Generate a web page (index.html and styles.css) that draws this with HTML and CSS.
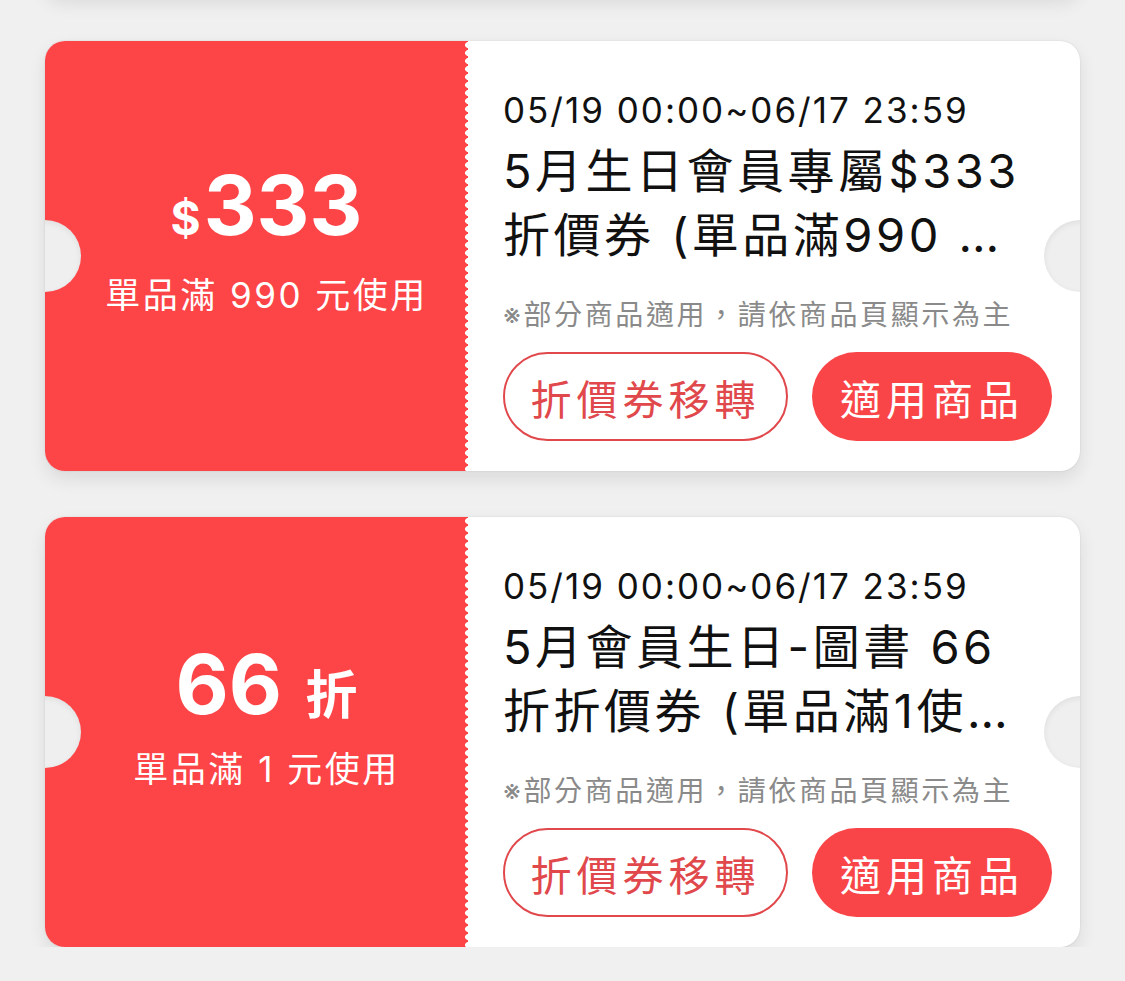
FILE: index.html
```html
<!DOCTYPE html>
<html lang="zh-Hant">
<head>
    <meta charset="UTF-8">
    <meta name="viewport" content="width=device-width, initial-scale=1.0">
    <title>我的折價券</title>
    <link rel="stylesheet" href="styles.css">
</head>
<body>
    <div class="coupon-list">
        <!-- tail of the coupon above, scrolled out of view -->
        <div class="coupon coupon-stub"></div>

        <div class="coupon">
            <div class="coupon-value">
                <div class="amount"><span class="unit-small">$</span>333</div>
                <div class="rule">單品滿 990 元使用</div>
            </div>
            <div class="coupon-info">
                <div class="period">05/19 00:00~06/17 23:59</div>
                <div class="title">5月生日會員專屬$333折價券 (單品滿990 元使用)</div>
                <div class="note">※部分商品適用，請依商品頁顯示為主</div>
                <div class="actions">
                    <button class="btn btn-outline">折價券移轉</button>
                    <button class="btn btn-fill">適用商品</button>
                </div>
            </div>
        </div>

        <div class="coupon">
            <div class="coupon-value">
                <div class="amount">66 <span class="unit-word">折</span></div>
                <div class="rule">單品滿 1 元使用</div>
            </div>
            <div class="coupon-info">
                <div class="period">05/19 00:00~06/17 23:59</div>
                <div class="title">5月會員生日-圖書 66折折價券 (單品滿1使用)</div>
                <div class="note">※部分商品適用，請依商品頁顯示為主</div>
                <div class="actions">
                    <button class="btn btn-outline">折價券移轉</button>
                    <button class="btn btn-fill">適用商品</button>
                </div>
            </div>
        </div>
    </div>
</body>
</html>
```

FILE: styles.css
```css
body {
    margin: 0;
    padding: 0;
    background-color: #f0f0f0;
    font-family: Inter, "Noto Sans CJK TC", sans-serif;
    color: #111;
    overflow: hidden;
}

.coupon-list {
    display: flex;
    flex-direction: column;
    gap: 46px;
    padding: 0 45px;
}

.coupon {
    position: relative;
    display: flex;
    height: 430px;
    border-radius: 20px;
    background-color: #fff;
    box-shadow: 0 0 2px rgba(0, 0, 0, 0.12), 0 8px 18px rgba(0, 0, 0, 0.09);
    overflow: hidden;
}

.coupon-stub {
    height: 30px;
    margin-top: -35px;
    flex-shrink: 0;
}

/* half-circle notches on both sides */
.coupon:not(.coupon-stub)::before,
.coupon:not(.coupon-stub)::after {
    content: "";
    position: absolute;
    top: 50%;
    width: 72px;
    height: 72px;
    margin-top: -36px;
    border-radius: 50%;
    background-color: #efefef;
    box-shadow: inset 0 2px 6px rgba(0, 0, 0, 0.07);
    z-index: 2;
}

.coupon::before {
    left: -36px;
}

.coupon::after {
    right: -36px;
}

.coupon-value {
    position: relative;
    width: 423px;
    flex-shrink: 0;
    display: flex;
    flex-direction: column;
    align-items: center;
    justify-content: center;
    padding: 0 0 36px 20px;
    box-sizing: border-box;
    background-color: #fd4447;
    color: #fff;
}

/* perforated edge */
.coupon-value::after {
    content: "";
    position: absolute;
    top: 0;
    right: 0;
    bottom: 0;
    width: 3px;
    background: radial-gradient(circle at 100% 50%, #fff 2.6px, transparent 3.2px);
    background-size: 3px 8px;
}

.amount {
    font-weight: 700;
    font-size: 82px;
    line-height: 90px;
}

.unit-small {
    font-size: 46px;
    margin-right: 3px;
}

.unit-word {
    font-family: "Noto Sans CJK TC", sans-serif;
    font-size: 52px;
    margin-left: 4px;
}

.rule {
    margin-top: 12px;
    font-size: 35px;
    line-height: 40px;
    letter-spacing: 2.5px;
}

.coupon-info {
    flex: 1;
    padding: 47px 30px 30px 35px;
    display: flex;
    flex-direction: column;
}

.period {
    font-size: 35px;
    line-height: 44px;
    letter-spacing: 2px;
}

.title {
    max-width: 520px;
    margin-top: 7px;
    font-size: 47px;
    line-height: 64px;
    letter-spacing: 3.5px;
    display: -webkit-box;
    -webkit-line-clamp: 2;
    -webkit-box-orient: vertical;
    overflow: hidden;
}

.note {
    margin-top: 28px;
    font-size: 28px;
    line-height: 40px;
    letter-spacing: 2.6px;
    color: #8a8a8a;
}

.actions {
    margin-top: auto;
    display: flex;
    justify-content: flex-end;
    gap: 24px;
}

.btn {
    height: 89px;
    border-radius: 45px;
    font-family: "Noto Sans CJK TC", sans-serif;
    font-size: 41px;
    letter-spacing: 5px;
    cursor: pointer;
}

.btn-outline {
    width: 285px;
    border: 2px solid #e0484c;
    background-color: #fff;
    color: #e0484c;
}

.btn-fill {
    width: 240px;
    border: none;
    background-color: #f94548;
    color: #fff;
}
```
